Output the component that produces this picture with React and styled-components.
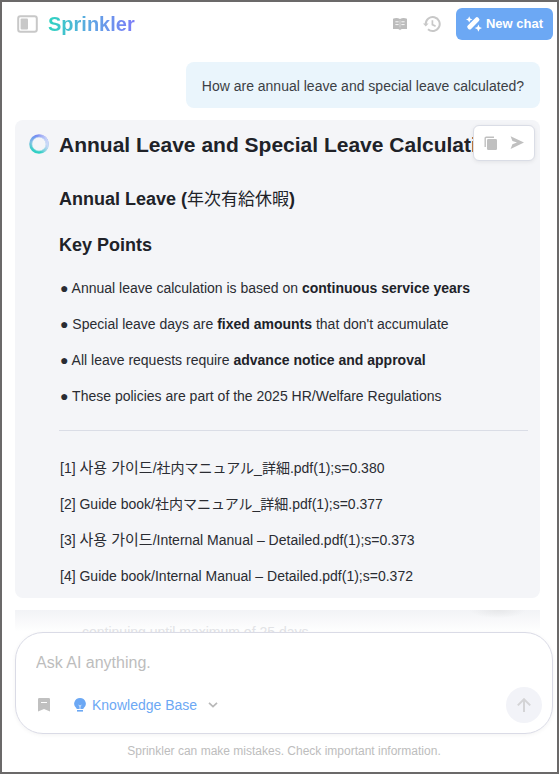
import styled, { createGlobalStyle } from "styled-components";
import { useState } from "react";

const points = [
    { id: 1, text: 'Annual leave calculation is based on ', strong: 'continuous service years', rest: '' },
    { id: 2, text: 'Special leave days are ', strong: 'fixed amounts', rest: " that don't accumulate" },
    { id: 3, text: 'All leave requests require ', strong: 'advance notice and approval', rest: '' },
    { id: 4, text: 'These policies are part of the 2025 HR/Welfare Regulations', strong: '', rest: '' },
]

const sources = [
    { id: 1, korean: '사용 가이드', file: '/社内マニュアル_詳細.pdf(1);s=0.380' },
    { id: 2, korean: '', file: 'Guide book/社内マニュアル_詳細.pdf(1);s=0.377' },
    { id: 3, korean: '사용 가이드', file: '/Internal Manual – Detailed.pdf(1);s=0.373' },
    { id: 4, korean: '', file: 'Guide book/Internal Manual – Detailed.pdf(1);s=0.372' },
]

const PanelIcon = () => (
    <svg width="21" height="18" viewBox="0 0 21 18">
        <rect x="1.2" y="1.2" width="18.6" height="15.6" rx="2.2" fill="none" stroke="#c8c8c8" strokeWidth="2" />
        <rect x="3.6" y="3.6" width="7.4" height="10.8" rx="1" fill="#c8c8c8" />
    </svg>
)

const BookIcon = () => (
    <svg width="14" height="14" viewBox="0 0 14 14">
        <path d="M0 1.8C2.5.8 5 .9 7 2.1 9 .9 11.5.8 14 1.8V12H9.3C8.3 12 7.6 12.4 7 13.2 6.4 12.4 5.7 12 4.7 12H0Z" fill="#bcbcbc" />
        <path d="M2.4 4.8h3.2M8.4 4.8h3.2M2.4 7.6h3.2M8.4 7.6h3.2" stroke="#fff" strokeWidth=".9" />
        <path d="M7 3.4v7" stroke="#fff" strokeWidth=".4" />
    </svg>
)

const HistoryIcon = () => (
    <svg width="18" height="18" viewBox="0 0 18 18">
        <path d="M2.7 9A7 7 0 1 1 5 14.2" fill="none" stroke="#c8c8c8" strokeWidth="2" />
        <path d="M0 8.4h5.6L2.8 11.6Z" fill="#c8c8c8" />
        <path d="M9.4 5.2v4.4l3.2 1.6" fill="none" stroke="#c8c8c8" strokeWidth="1.7" />
    </svg>
)

const WandIcon = () => (
    <svg width="16" height="16" viewBox="0 0 16 16" fill="#fff">
        <path d="M9.6 1.8a1.9 1.9 0 0 1 2.7 0l.6.6a1.9 1.9 0 0 1 0 2.7L5.1 12.9a1.9 1.9 0 0 1-2.7 0l-.6-.6a1.9 1.9 0 0 1 0-2.7Z" />
        <path d="M3.2.2l1 2.2 2.2 1-2.2 1-1 2.2-1-2.2L0 3.4l2.2-1Z" />
        <path d="M12.4 8.4l1.1 2.6 2.5 1.1-2.5 1.1-1.1 2.6-1.1-2.6-2.6-1.1 2.6-1.1Z" />
    </svg>
)

const CopyIcon = () => (
    <svg width="14" height="14" viewBox="0 0 14 14">
        <path d="M1.2 11V2.2a1 1 0 0 1 1-1H10" fill="none" stroke="#c0c0c0" strokeWidth="1.4" />
        <rect x="3" y="3" width="10" height="11" rx="1.2" fill="#c0c0c0" />
    </svg>
)

const SendIcon = () => (
    <svg width="14" height="14" viewBox="0 0 14 14">
        <path d="M.6.2 14 6.6.6 13 2.4 8.2 7 6.6 2.4 5Z" fill="#c0c0c0" />
    </svg>
)

const BookmarkIcon = () => (
    <svg width="12" height="14" viewBox="0 0 12 14">
        <path d="M0 1.2A1.2 1.2 0 0 1 1.2 0h9.6A1.2 1.2 0 0 1 12 1.2V13.5L6 11 0 13.5Z" fill="#c0c0c0" />
        <path d="M3 4.5h6" stroke="#fff" strokeWidth="1" />
    </svg>
)

const BulbIcon = () => (
    <svg width="12" height="14" viewBox="0 0 12 14">
        <path d="M6 0a5.8 5.8 0 0 1 3.4 10.5V11H2.6v-.5A5.8 5.8 0 0 1 6 0Z" fill="#6ca8f4" />
        <path d="M6 11V7.6M4.6 7.2 6 8.2l1.4-1" fill="none" stroke="#fff" strokeWidth=".7" />
        <path d="M3 12.8h6" stroke="#6ca8f4" strokeWidth="1.6" />
    </svg>
)

const ChevronIcon = () => (
    <svg width="10" height="6" viewBox="0 0 10 6">
        <path d="M1 .8 5 4.6 9 .8" fill="none" stroke="#b8b8b8" strokeWidth="1.7" />
    </svg>
)

const ArrowUpIcon = () => (
    <svg width="14" height="14" viewBox="0 0 14 14">
        <path d="M7 14V1.4M.8 7.4 7 1.2l6.2 6.2" fill="none" stroke="#d4d4d6" strokeWidth="2" />
    </svg>
)

const LogoRing = () => (
    <Ring width="20" height="20" viewBox="0 0 20 20">
        <defs>
            <linearGradient id="ring" x1=".35" y1="1" x2=".5" y2="0">
                <stop offset="0" stopColor="#2fd0c4" />
                <stop offset=".2" stopColor="#45cbcc" />
                <stop offset=".55" stopColor="#7fc0e2" />
                <stop offset=".85" stopColor="#6f9bee" />
                <stop offset="1" stopColor="#7c8cf2" />
            </linearGradient>
            <linearGradient id="shine" x1="0" y1=".6" x2="1" y2=".4">
                <stop offset=".5" stopColor="#d4dafa" stopOpacity="0" />
                <stop offset="1" stopColor="#d4dafa" stopOpacity=".9" />
            </linearGradient>
        </defs>
        <circle cx="10" cy="10" r="8.3" fill="none" stroke="url(#ring)" strokeWidth="3" />
        <circle cx="10" cy="10" r="8.3" fill="none" stroke="url(#shine)" strokeWidth="3" />
        <circle cx="10" cy="10" r="7" fill="none" stroke="#fff" strokeOpacity=".5" strokeWidth=".6" />
    </Ring>
)

const App = () => {
    const [question, setQuestion] = useState('')

    return (
        <Window>
            <GlobalStyle />
            <Header>
                <IconButton aria-label="Toggle sidebar"><PanelIcon /></IconButton>
                <Brand>Sprinkler</Brand>
                <HeaderTools>
                    <IconButton aria-label="Guide"><BookIcon /></IconButton>
                    <IconButton aria-label="History"><HistoryIcon /></IconButton>
                </HeaderTools>
                <NewChat><WandIcon />New chat</NewChat>
            </Header>
            <Messages>
                <UserMessage>How are annual leave and special leave calculated?</UserMessage>
                <Answer>
                    <LogoRing />
                    <AnswerBody>
                        <h1>Annual Leave and Special Leave Calculation</h1>
                        <h2>Annual Leave (<Kanji lang="ja">年次有給休暇</Kanji>)</h2>
                        <h2>Key Points</h2>
                        <Lines>
                            {points.map(point => (
                                <li key={point.id}>● {point.text}<strong>{point.strong}</strong>{point.rest}</li>
                            ))}
                        </Lines>
                        <hr />
                        <Lines>
                            {sources.map(source => (
                                <li key={source.id}>[{source.id}] <Hangul lang="ko">{source.korean}</Hangul>{source.file}</li>
                            ))}
                        </Lines>
                    </AnswerBody>
                    <Actions>
                        <IconButton aria-label="Copy"><CopyIcon /></IconButton>
                        <IconButton aria-label="Send"><SendIcon /></IconButton>
                    </Actions>
                </Answer>
                <NextAnswer>continuing until maximum of 25 days</NextAnswer>
            </Messages>
            <Composer onSubmit={e => e.preventDefault()}>
                <input
                    aria-label="Ask AI anything."
                    placeholder="Ask AI anything."
                    value={question}
                    onChange={e => setQuestion(e.target.value)}
                />
                <ComposerTools>
                    <IconButton type="button" aria-label="Saved prompts"><BookmarkIcon /></IconButton>
                    <KnowledgeBase type="button"><BulbIcon />Knowledge Base<ChevronIcon /></KnowledgeBase>
                    <Submit aria-label="Ask"><ArrowUpIcon /></Submit>
                </ComposerTools>
            </Composer>
            <Notice>Sprinkler can make mistakes. Check important information.</Notice>
        </Window>
    );
}

const GlobalStyle = createGlobalStyle`
    *{
        box-sizing: border-box;
        margin: 0;
        padding: 0;
    }
    body{
        background: #fff;
        color: #202228;
        font-family: "Liberation Sans", "Noto Sans CJK JP", "Noto Sans CJK KR", sans-serif;
        font-size: 14px;
        line-height: 20px;
    }
    button, input{
        font: inherit;
        border: none;
        background: none;
        outline: none;
    }
    button{
        cursor: pointer;
    }
    svg{
        display: block;
        flex-shrink: 0;
    }
`

const Window = styled.div`
    display: flex;
    flex-direction: column;
    min-height: 100vh;
    border: 2px solid #6b6969;
`

const Header = styled.header`
    display: flex;
    align-items: center;
    padding: 6px 4px 6px 15px;
`

const IconButton = styled.button`
    display: flex;
    align-items: center;
    justify-content: center;
`

const Brand = styled.div`
    margin-left: 10px;
    font-size: 20px;
    line-height: 24px;
    font-weight: 700;
    color: transparent;
    background: linear-gradient(90deg, #2dd4bf, #60a5e4 50%, #7c7cf8);
    background-clip: text;
`

const HeaderTools = styled.div`
    display: flex;
    gap: 16px;
    margin-left: auto;
    margin-right: 15px;
`

const NewChat = styled.button`
    display: flex;
    align-items: center;
    gap: 4px;
    height: 32px;
    padding: 0 10px;
    border-radius: 6px;
    background: #6ca8f4;
    color: #fff;
    font-size: 13px;
    font-weight: 700;
`

const Messages = styled.main`
    flex: 1;
    display: flex;
    flex-direction: column;
    gap: 12px;
    padding: 16px 17px 0 13px;
`

const UserMessage = styled.div`
    align-self: flex-end;
    padding: 14px 16px 12px;
    border-radius: 8px;
    background: #eaf5fc;
    color: #3c3f45;
`

const Answer = styled.article`
    position: relative;
    display: flex;
    gap: 10px;
    padding: 13px 12px 12px 14px;
    border-radius: 8px;
    background: #f4f5f8;
`

const Ring = styled.svg`
    margin-top: 1px;
`

const AnswerBody = styled.div`
    flex: 1;
    min-width: 0;

    h1{
        margin-bottom: 30px;
        font-size: 21px;
        line-height: 24px;
        white-space: nowrap;
        overflow: hidden;
    }
    h2{
        margin-bottom: 22px;
        font-size: 18px;
        line-height: 24px;
    }
    h2 + ul{
        margin-top: -1px;
    }
    hr{
        margin: 24px 0 27px;
        border: none;
        border-top: 1px solid #dadde6;
    }
`

const Kanji = styled.span`
    font-size: 17px;
    line-height: 1;
    font-weight: 400;
`

const Hangul = styled.span`
    font-size: 15px;
    line-height: 1;
`

const Lines = styled.ul`
    display: flex;
    flex-direction: column;
    gap: 16px;
    padding-left: 1px;
    color: #2a2c32;
    list-style: none;

    li{
        height: 20px;
    }
    strong{
        color: #202228;
    }
`

const Actions = styled.div`
    position: absolute;
    top: 5px;
    right: 5px;
    display: flex;
    gap: 12px;
    padding: 10px;
    height: 36px;
    border: 1px solid #dadde6;
    border-radius: 6px;
    background: #fff;
    box-shadow: 0 1px 4px rgba(0, 0, 0, 0.08);
`

const NextAnswer = styled.div`
    height: 22px;
    padding: 12px 67px 0;
    overflow: hidden;
    background:
        radial-gradient(ellipse 28px 8px at calc(100% - 42px) 0, #e6e7e9, transparent),
        linear-gradient(#f2f3f6, #fff);
    color: #e2e3e6;
`

const Composer = styled.form`
    display: flex;
    flex-direction: column;
    gap: 13px;
    margin: 0 4px 0 13px;
    padding: 19px 10px 10px 20px;
    border: 1px solid #dadbe6;
    border-radius: 28px;
    box-shadow: 0 1px 4px rgba(0, 0, 0, 0.05);

    input{
        width: 100%;
        height: 22px;
        font-size: 16px;
    }
    input::placeholder{
        color: #bdbdbd;
        opacity: 1;
    }
`

const ComposerTools = styled.div`
    display: flex;
    align-items: center;
    gap: 24px;
    padding-left: 2px;
`

const KnowledgeBase = styled.button`
    display: flex;
    align-items: center;
    gap: 6px;
    color: #6ca8f4;

    svg:last-child{
        margin-left: 5px;
    }
`

const Submit = styled.button`
    display: flex;
    align-items: center;
    justify-content: center;
    width: 36px;
    height: 36px;
    margin-left: auto;
    border-radius: 50%;
    background: #f2f3f8;
`

const Notice = styled.p`
    padding: 7px 4px 11px 13px;
    color: #bdbdbd;
    font-size: 12px;
    text-align: center;
`

export default App;
